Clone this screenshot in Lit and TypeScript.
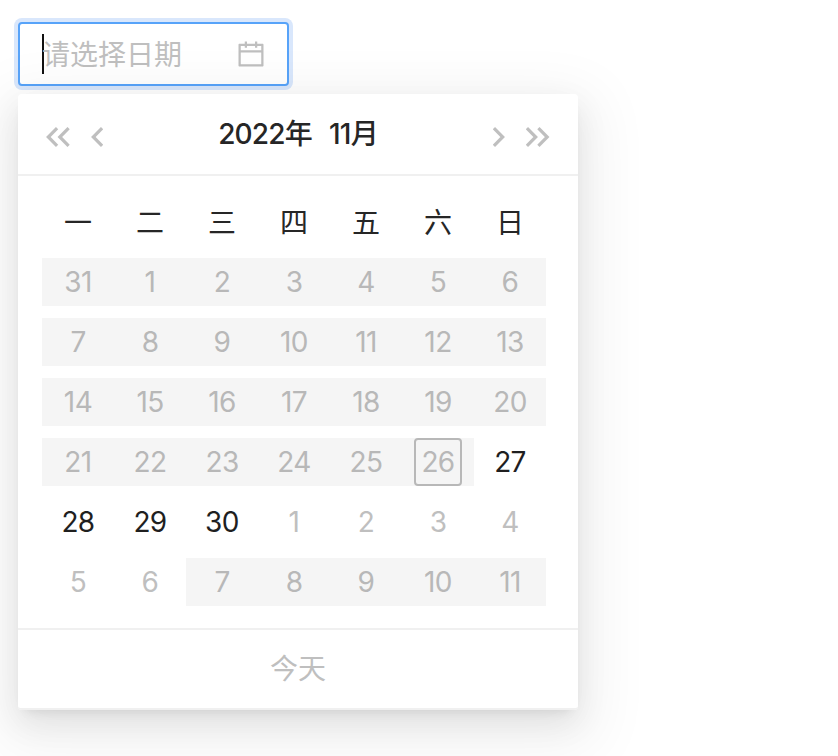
import { LitElement, html, svg, css } from 'lit';
import { customElement, property } from 'lit/decorators.js';
import { classMap } from 'lit/directives/class-map.js';

interface Day {
  label: number;
  inView: boolean;
  disabled: boolean;
  today: boolean;
}

const WEEKDAYS = ['一', '二', '三', '四', '五', '六', '日'];

// the panel always shows 6 weeks starting on monday
function buildWeeks(year: number, month: number, today: number, lastAllowed: Date): Day[][] {
  const offset = (new Date(year, month, 1).getDay() + 6) % 7;
  const weeks: Day[][] = [];
  for (let w = 0; w < 6; w++) {
    const week: Day[] = [];
    for (let d = 0; d < 7; d++) {
      const date = new Date(year, month, 1 - offset + w * 7 + d);
      week.push({
        label: date.getDate(),
        inView: date.getMonth() === month,
        disabled: date <= new Date(year, month, today) || date > lastAllowed,
        today: date.getMonth() === month && date.getDate() === today,
      });
    }
    weeks.push(week);
  }
  return weeks;
}

@customElement('date-input')
export class DateInput extends LitElement {
  @property() placeholder = '';

  static styles = css`
    :host {
      display: block;
    }
    .field {
      display: flex;
      align-items: center;
      justify-content: space-between;
      box-sizing: border-box;
      width: 271px;
      height: 64px;
      padding: 0 22px;
      border: 2px solid #57a3f9;
      border-radius: 4px;
      box-shadow: 0 0 0 4px #d9e7fc;
      background: #fff;
    }
    .text {
      display: flex;
      align-items: center;
      color: #bfbfbf;
      font-size: 28px;
      line-height: 40px;
    }
    .caret {
      width: 2px;
      height: 40px;
      margin-right: -2px;
      background: #111;
    }
    .placeholder {
      padding-top: 2px;
    }
    .icon {
      width: 28px;
      height: 28px;
      fill: #bfbfbf;
    }
  `;

  render() {
    return html`
      <div class="field">
        <div class="text"><span class="caret"></span><span class="placeholder">${this.placeholder}</span></div>
        <svg class="icon" viewBox="64 64 896 896">
          <path d="M880 184H712v-64c0-4.4-3.6-8-8-8h-56c-4.4 0-8 3.6-8 8v64H384v-64c0-4.4-3.6-8-8-8h-56c-4.4 0-8 3.6-8 8v64H144c-17.7 0-32 14.3-32 32v664c0 17.7 14.3 32 32 32h736c17.7 0 32-14.3 32-32V216c0-17.7-14.3-32-32-32zm-40 656H184V460h656v380zM184 392V256h128v48c0 4.4 3.6 8 8 8h56c4.4 0 8-3.6 8-8v-48h256v48c0 4.4 3.6 8 8 8h56c4.4 0 8-3.6 8-8v-48h128v136H184z"></path>
        </svg>
      </div>
    `;
  }
}

@customElement('date-panel')
export class DatePanel extends LitElement {
  @property({ type: Number }) year = 2022;
  @property({ type: Number }) month = 10;
  @property({ type: Number }) today = 26;

  static styles = css`
    :host {
      display: block;
      position: relative;
    }
    .panel {
      box-sizing: border-box;
      width: 560px;
      background: #fff;
      border-radius: 4px;
      box-shadow: 0 6px 12px -8px rgba(0, 0, 0, 0.14), 0 12px 32px 0 rgba(0, 0, 0, 0.08),
        0 18px 60px 18px rgba(0, 0, 0, 0.058);
    }
    .header {
      display: flex;
      align-items: center;
      justify-content: space-between;
      height: 80px;
      padding: 0 27.5px;
      border-bottom: 2px solid #f0f0f0;
    }
    .arrows {
      display: flex;
      gap: 21.5px;
      padding-top: 6px;
    }
    .arrow {
      display: block;
      height: 20px;
      fill: none;
      stroke: #bfbfbf;
      stroke-width: 3.2;
    }
    .title {
      display: flex;
      gap: 17px;
      color: #262626;
      font-size: 28px;
      font-weight: 500;
      line-height: 80px;
      letter-spacing: -0.8px;
    }
    .body {
      padding: 16px 24px;
    }
    .row {
      display: grid;
      grid-template-columns: repeat(7, 72px);
      height: 60px;
      align-items: center;
      text-align: center;
      font-size: 28px;
      line-height: 48px;
    }
    .weekday {
      padding-top: 2px;
      color: #262626;
    }
    .cell {
      display: flex;
      justify-content: center;
      height: 48px;
      color: #bfbfbf;
    }
    .cell.in-view {
      color: #1f1f1f;
    }
    .cell.disabled {
      color: #b8b8b8;
      background: #f5f5f5;
    }
    .inner {
      box-sizing: border-box;
      width: 48px;
      height: 48px;
      letter-spacing: -0.6px;
    }
    .today .inner {
      line-height: 44px;
      border: 2px solid #b8b8b8;
      border-radius: 4px;
    }
    .footer {
      height: 78px;
      border-top: 2px solid #f0f0f0;
      border-bottom: 2px solid #f0f0f0;
      border-radius: 0 0 4px 4px;
      color: #bfbfbf;
      font-size: 28px;
      line-height: 78px;
      text-align: center;
    }
  `;

  renderArrow(double: boolean, next: boolean) {
    const width = double ? 24 : 12;
    const step = next ? 'M0.9 1.2L9.7 10L0.9 18.8' : 'M11.1 1.2L2.3 10L11.1 18.8';
    return html`
      <svg class="arrow" width=${width} height="20" viewBox="0 0 ${width} 20">
        <path d=${step}></path>
        ${double ? svg`<path d=${step} transform="translate(11.5 0)"></path>` : ''}
      </svg>
    `;
  }

  renderDay(day: Day) {
    const classes = {
      cell: true,
      'in-view': day.inView,
      disabled: day.disabled,
      today: day.today,
    };
    return html`<div class=${classMap(classes)}><div class="inner">${day.label}</div></div>`;
  }

  render() {
    const weeks = buildWeeks(this.year, this.month, this.today, new Date(this.year, this.month + 1, 6));
    return html`
      <div class="panel">
        <div class="header">
          <div class="arrows">${this.renderArrow(true, false)}${this.renderArrow(false, false)}</div>
          <div class="title"><span>${this.year}年</span><span>${this.month + 1}月</span></div>
          <div class="arrows">${this.renderArrow(false, true)}${this.renderArrow(true, true)}</div>
        </div>
        <div class="body">
          <div class="row">${WEEKDAYS.map((d) => html`<div class="weekday">${d}</div>`)}</div>
          ${weeks.map((week) => html`<div class="row">${week.map((day) => this.renderDay(day))}</div>`)}
        </div>
        <div class="footer">今天</div>
      </div>
    `;
  }
}

@customElement('app-root')
export class AppRoot extends LitElement {
  static styles = css`
    :host {
      display: flex;
      flex-direction: column;
      gap: 8px;
      box-sizing: border-box;
      height: 756px;
      padding: 22px 18px 0;
      overflow: hidden;
      background: #fff;
      font-family: Inter, 'Noto Sans CJK SC', sans-serif;
    }
  `;

  render() {
    return html`
      <date-input placeholder="请选择日期"></date-input>
      <date-panel></date-panel>
    `;
  }
}
